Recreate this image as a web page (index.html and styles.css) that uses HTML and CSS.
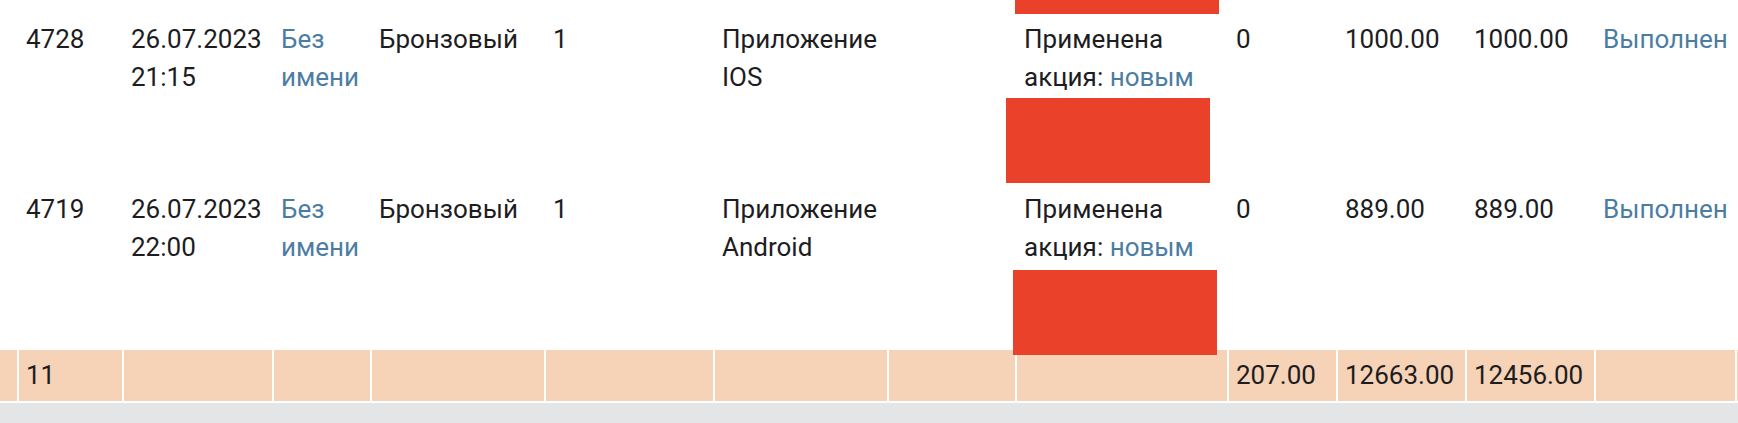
FILE: index.html
```html
<!DOCTYPE html>
<html lang="ru">
<head>
<meta charset="utf-8">
<title>Заказы</title>
<link rel="stylesheet" href="styles.css">
</head>
<body>
<div class="viewport">
  <table class="orders">
    <colgroup>
      <col class="c-check">
      <col class="c-id">
      <col class="c-date">
      <col class="c-client">
      <col class="c-level">
      <col class="c-qty">
      <col class="c-source">
      <col class="c-extra">
      <col class="c-promo">
      <col class="c-bonus">
      <col class="c-sum">
      <col class="c-total">
      <col class="c-status">
      <col class="c-more">
    </colgroup>
    <tbody>
      <tr class="tail">
        <td></td><td></td><td></td><td></td><td></td><td></td><td></td><td></td>
        <td><div class="redact redact-tail"></div></td>
        <td></td><td></td><td></td><td></td><td></td>
      </tr>
      <tr class="order">
        <td></td>
        <td>4728</td>
        <td>26.07.2023<br>21:15</td>
        <td><a class="link" href="#">Без имени</a></td>
        <td>Бронзовый</td>
        <td>1</td>
        <td>Приложение IOS</td>
        <td></td>
        <td>
          <div class="promo"><span>Применена</span> <span>акция:</span> <a class="link" href="#">новым</a></div>
          <div class="redact redact-a"></div>
        </td>
        <td>0</td>
        <td>1000.00</td>
        <td>1000.00</td>
        <td><a class="link" href="#">Выполнен</a></td>
        <td></td>
      </tr>
      <tr class="order">
        <td></td>
        <td>4719</td>
        <td>26.07.2023<br>22:00</td>
        <td><a class="link" href="#">Без имени</a></td>
        <td>Бронзовый</td>
        <td>1</td>
        <td>Приложение Android</td>
        <td></td>
        <td>
          <div class="promo"><span>Применена</span> <span>акция:</span> <a class="link" href="#">новым</a></div>
          <div class="redact redact-b"></div>
        </td>
        <td>0</td>
        <td>889.00</td>
        <td>889.00</td>
        <td><a class="link" href="#">Выполнен</a></td>
        <td></td>
      </tr>
    </tbody>
    <tfoot>
      <tr class="totals">
        <td></td>
        <td>11</td>
        <td></td>
        <td></td>
        <td></td>
        <td></td>
        <td></td>
        <td></td>
        <td></td>
        <td>207.00</td>
        <td>12663.00</td>
        <td>12456.00</td>
        <td></td>
        <td></td>
      </tr>
    </tfoot>
  </table>
</div>
<div class="scroll-area"></div>
</body>
</html>
```

FILE: styles.css
```css
html, body {
  margin: 0;
  padding: 0;
  background: #ffffff;
}

body {
  font-family: Roboto, "Liberation Sans", Arial, sans-serif;
  font-size: 26px;
  line-height: 38px;
  color: #1d1d1f;
  overflow: hidden;
}

.viewport {
  width: 1738px;
  overflow: hidden;
}

.orders {
  table-layout: fixed;
  border-collapse: separate;
  border-spacing: 0;
  width: 1835px;
}

.c-check  { width: 17px; }
.c-id     { width: 105px; }
.c-date   { width: 150px; }
.c-client { width: 98px; }
.c-level  { width: 174px; }
.c-qty    { width: 169px; }
.c-source { width: 174px; }
.c-extra  { width: 128px; }
.c-promo  { width: 212px; }
.c-bonus  { width: 109px; }
.c-sum    { width: 129px; }
.c-total  { width: 129px; }
.c-status { width: 141px; }
.c-more   { width: 100px; }

.orders td {
  vertical-align: top;
  text-align: left;
  padding: 10px 6px 8px 7px;
  border-left: 2px solid #ffffff;
  overflow: visible;
}

.orders td:first-child {
  border-left: 0;
  padding: 0;
}

.orders .tail td {
  padding: 0;
  height: 10px;
}

.link {
  color: #4b7da3;
  text-decoration: none;
}

.redact {
  position: relative;
  height: 76px;
}

.redact::before {
  content: "";
  position: absolute;
  width: 204px;
  height: 85px;
  background: #e9412a;
}

.redact-tail {
  height: 10px;
}

.redact-tail::before {
  top: 0;
  left: -2px;
  height: 14px;
}

.redact-a::before {
  top: 2px;
  left: -18px;
}

.redact-b::before {
  top: 4px;
  left: -11px;
}

.totals td {
  background: #f6d3b7;
  vertical-align: middle;
  padding: 6px 6px 7px 7px;
  border-bottom: 2px solid #ffffff;
}

.totals td:first-child {
  padding: 0;
}

.scroll-area {
  height: 30px;
  background: #e4e5e7;
}
```
